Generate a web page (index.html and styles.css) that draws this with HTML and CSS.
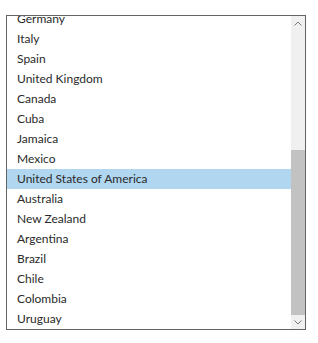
FILE: index.html
```html
<!DOCTYPE html>
<html lang="en">
  <head>
    <meta charset="UTF-8" />
    <meta name="viewport" content="width=device-width, initial-scale=1.0" />
    <title>Countries</title>
    <link rel="stylesheet" href="styles.css">
  </head>
  <body>
    <div class="listbox">
      <div class="list">
        <ul class="items">
          <li>Germany</li>
          <li>Italy</li>
          <li>Spain</li>
          <li>United Kingdom</li>
          <li>Canada</li>
          <li>Cuba</li>
          <li>Jamaica</li>
          <li>Mexico</li>
          <li class="selected">United States of America</li>
          <li>Australia</li>
          <li>New Zealand</li>
          <li>Argentina</li>
          <li>Brazil</li>
          <li>Chile</li>
          <li>Colombia</li>
          <li>Uruguay</li>
        </ul>
      </div>
      <div class="scrollbar">
        <div class="arrow">
          <svg width="8" height="5" viewBox="0 0 8 5"><polyline points="0.5,4.5 4,1 7.5,4.5" fill="none" stroke="#7a7a7a" stroke-width="1"/></svg>
        </div>
        <div class="track">
          <div class="thumb"></div>
        </div>
        <div class="arrow">
          <svg width="8" height="5" viewBox="0 0 8 5"><polyline points="0.5,0.5 4,4 7.5,0.5" fill="none" stroke="#7a7a7a" stroke-width="1"/></svg>
        </div>
      </div>
    </div>
  </body>
</html>
```

FILE: styles.css
```css
* {
  margin: 0;
  padding: 0;
  box-sizing: border-box;
}

body {
  font-family: Lato, "Open Sans", sans-serif;
  background-color: #fff;
  padding: 15px 0 0 6px;
}

.listbox {
  display: flex;
  width: 300px;
  height: 315px;
  border: 1px solid #646464;
}

.list {
  flex: 1;
  overflow: hidden;
}

.items {
  list-style: none;
  margin-top: -7px;
}

.items li {
  height: 20px;
  line-height: 20px;
  padding-left: 10px;
  font-size: 12px;
  color: #2a2a2a;
  white-space: nowrap;
}

.items li.selected {
  background-color: #b1d6f0;
}

.scrollbar {
  width: 14px;
  display: flex;
  flex-direction: column;
  background-color: #f0f0f0;
}

.arrow {
  height: 14px;
  display: flex;
  align-items: center;
  justify-content: center;
}

.track {
  flex: 1;
  display: flex;
  flex-direction: column;
  justify-content: flex-end;
}

.thumb {
  height: 165px;
  background-color: #c2c2c2;
}
```
